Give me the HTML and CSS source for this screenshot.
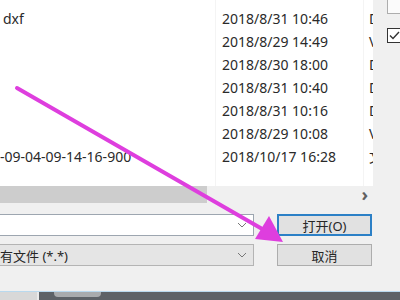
FILE: index.html
```html
<!DOCTYPE html>
<html lang="zh-CN">
<head>
    <meta charset="UTF-8">
    <meta name="viewport" content="width=device-width, initial-scale=1.0">
    <title>打开文件</title>
    <link rel="stylesheet" href="styles.css">
</head>
<body>
    <div class="dialog">
        <div class="files">
            <div class="list">
                <div class="col name-col">
                    <div class="row"></div>
                    <div class="row name-dxf">dxf</div>
                    <div class="row"></div>
                    <div class="row"></div>
                    <div class="row"></div>
                    <div class="row"></div>
                    <div class="row"></div>
                    <div class="row">-09-04-09-14-16-900</div>
                </div>
                <div class="col date-col">
                    <div class="row"></div>
                    <div class="row">2018/8/31 10:46</div>
                    <div class="row">2018/8/29 14:49</div>
                    <div class="row">2018/8/30 18:00</div>
                    <div class="row">2018/8/31 10:40</div>
                    <div class="row">2018/8/31 10:16</div>
                    <div class="row">2018/8/29 10:08</div>
                    <div class="row">2018/10/17 16:28</div>
                </div>
                <div class="col type-col">
                    <div class="row"></div>
                    <div class="row">D</div>
                    <div class="row">V</div>
                    <div class="row">D</div>
                    <div class="row">D</div>
                    <div class="row">D</div>
                    <div class="row">V</div>
                    <div class="row">文</div>
                </div>
            </div>
            <div class="side">
                <div class="side-box"></div>
                <div class="side-check">
                    <svg width="13" height="13" viewBox="0 0 13 13">
                        <path d="M2 6.5 L5 9.5 L11 3" fill="none" stroke="#333" stroke-width="1.4"/>
                    </svg>
                </div>
            </div>
        </div>

        <div class="hscroll">
            <div class="track">
                <div class="thumb"></div>
                <span class="scroll-arrow">&#x203A;</span>
            </div>
        </div>

        <div class="controls">
            <div class="field edit">
                <span class="field-text"></span>
                <svg class="chev" width="10" height="6" viewBox="0 0 10 6"><path d="M1 1 L5 5 L9 1" fill="none" stroke="#777" stroke-width="1"/></svg>
            </div>
            <button class="btn btn-default">打开(O)</button>
            <div class="field filter">
                <span class="field-text">有文件 (*.*)</span>
                <svg class="chev" width="10" height="6" viewBox="0 0 10 6"><path d="M1 1 L5 5 L9 1" fill="none" stroke="#777" stroke-width="1"/></svg>
            </div>
            <button class="btn">取消</button>
        </div>

        <div class="taskbar">
            <div class="task-left"></div>
            <div class="task-tab"></div>
        </div>
    </div>

    <svg class="arrow" width="400" height="300" viewBox="0 0 400 300">
        <line x1="17" y1="88" x2="264" y2="230" stroke="#de3ede" stroke-width="4" stroke-linecap="round"/>
        <polygon points="283,242 255,239 269,216" fill="#de3ede"/>
    </svg>
</body>
</html>
```

FILE: styles.css
```css
body {
    margin: 0;
    padding: 0;
    background-color: #f0f0f0;
    font-family: "Noto Sans", "Noto Sans CJK SC", sans-serif;
    font-size: 13px;
    color: #262626;
}
.dialog {
    width: 400px;
    height: 300px;
    display: flex;
    flex-direction: column;
    overflow: hidden;
}
.files {
    height: 187px;
    display: flex;
}
.list {
    width: 373px;
    background: white;
    display: flex;
    overflow: hidden;
    font-size: 14px;
    color: #2a2a2a;
}
.col {
    margin-top: -16px;
}
.row {
    height: 23px;
    line-height: 23px;
    white-space: nowrap;
}
.name-col {
    width: 215px;
    border-right: 1px solid #f4f4f4;
}
.name-dxf {
    padding-left: 3px;
}
.date-col {
    width: 141px;
    padding-left: 6px;
    border-right: 1px solid #f4f4f4;
}
.type-col {
    width: 4px;
    padding-left: 5px;
    overflow: hidden;
}
.side {
    flex: 1;
    background: #f0f0f0;
    display: flex;
    flex-direction: column;
    align-items: flex-end;
}
.side-box {
    width: 12px;
    height: 13px;
    background: #fbfbfb;
    border: 1px solid #adadad;
    border-top: none;
    border-right: none;
}
.side-check {
    width: 12px;
    height: 13px;
    margin-top: 14px;
    background: white;
    border: 1px solid #333;
    border-right: none;
    overflow: hidden;
}
.side-check svg {
    display: block;
}
.hscroll {
    height: 17px;
    display: flex;
}
.track {
    width: 374px;
    background: #f0f0f0;
    display: flex;
    align-items: center;
    justify-content: space-between;
}
.thumb {
    width: 207px;
    height: 17px;
    background: #cdcdcd;
}
.scroll-arrow {
    font-size: 18px;
    font-weight: bold;
    color: #606060;
    margin-right: 6px;
    line-height: 17px;
}
.controls {
    height: 88px;
    display: grid;
    grid-template-columns: 254px 95px;
    grid-template-rows: 22px 22px;
    column-gap: 23px;
    row-gap: 8px;
    padding-top: 11px;
    box-sizing: border-box;
}
.field {
    display: flex;
    align-items: center;
    justify-content: space-between;
    box-sizing: border-box;
    padding-right: 6px;
}
.edit {
    background: white;
    border: 1px solid #9da6b0;
    border-left: none;
}
.filter {
    background: #e5e5e5;
    border: 1px solid #b4b4b4;
    border-left: none;
}
.field-text {
    white-space: nowrap;
}
.btn {
    font-family: "Noto Sans", "Noto Sans CJK SC", sans-serif;
    font-size: 13px;
    color: #262626;
    background: #e1e1e1;
    border: 1px solid #adadad;
    padding: 0;
    margin: 0;
}
.btn-default {
    border: 2px solid #2c80c6;
}
.taskbar {
    height: 8px;
    border-top: 1px solid #b9d9ee;
    background: #5e6267;
    display: flex;
}
.task-left {
    width: 37px;
    background: #d8d8d8;
    border-right: 2px solid #eaeaea;
}
.task-tab {
    width: 47px;
    height: 5px;
    margin-left: 15px;
    background: #a9abad;
    border-radius: 0 0 4px 4px;
}
.arrow {
    position: absolute;
    left: 0;
    top: 0;
    pointer-events: none;
}
```
